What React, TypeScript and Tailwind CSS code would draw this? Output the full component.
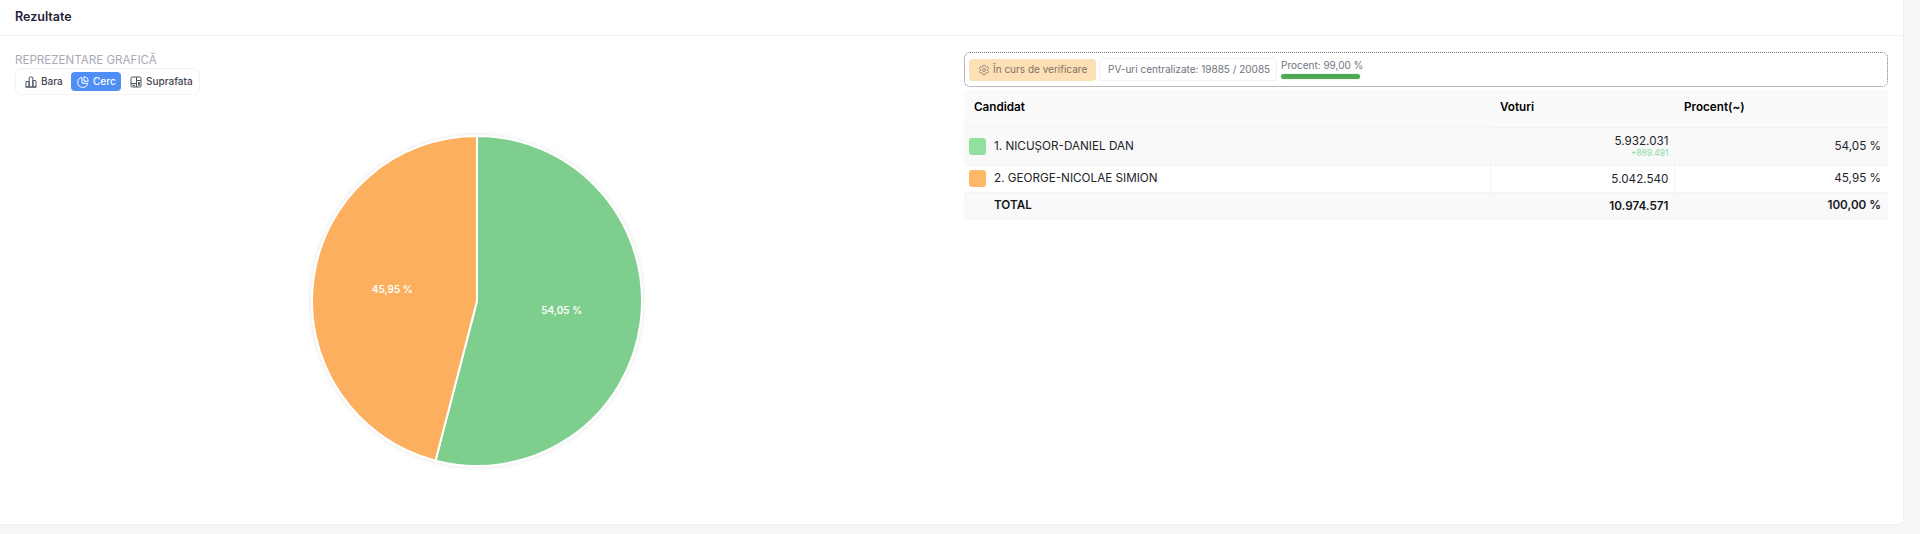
import { Settings } from 'lucide-react';

const font = "font-['Inter','Liberation_Sans',sans-serif]";

function BarIcon() {
  return (
    <svg width="12" height="12" viewBox="0 0 12 12" fill="none" stroke="#4b5563" strokeWidth="1">
      <path d="M1 5.5h3V11H1zM4.2 11V2a1 1 0 0 1 1-1h1.6a1 1 0 0 1 1 1v9zM8 4.5h2.2a.8.8 0 0 1 .8.8V11H8zM.5 11h11" />
    </svg>
  );
}

function PieIcon() {
  return (
    <svg width="12" height="12" viewBox="0 0 12 12" fill="none" stroke="#ffffff" strokeWidth="1">
      <path d="M5 1.4A5 5 0 1 0 10.7 7.2H5z" strokeLinejoin="round" />
      <path d="M7 .8a4.4 4.4 0 0 1 4.2 4.4H7z" strokeLinejoin="round" />
    </svg>
  );
}

function AreaIcon() {
  return (
    <svg width="12" height="12" viewBox="0 0 12 12" fill="none" stroke="#4b5563" strokeWidth="1">
      <rect x="1" y="1" width="10" height="10" rx="1.2" />
      <path d="M1 7.5h5.5M6.5 1v10M6.5 4.5H11" />
      <rect x="2.5" y="8.8" width="2.6" height="1.2" fill="#4b5563" stroke="none" />
      <rect x="8" y="6" width="1.8" height="3.6" fill="#4b5563" stroke="none" />
    </svg>
  );
}

function Pie() {
  const cx = 462;
  const cy = 207;
  const r = 165;
  const a = (54.05 / 100) * Math.PI * 2;
  const ex = cx + r * Math.sin(a);
  const ey = cy - r * Math.cos(a);
  return (
    <svg width="924" height="420" className="block" style={{ overflow: 'visible' }}>
      <defs>
        <filter id="soft" x="-10%" y="-10%" width="120%" height="120%">
          <feDropShadow dx="0" dy="0" stdDeviation="2" floodColor="#000000" floodOpacity="0.12" />
        </filter>
      </defs>
      <g filter="url(#soft)" stroke="#ffffff" strokeWidth="2" strokeLinejoin="round">
        <path d={`M${cx} ${cy}L${cx} ${cy - r}A${r} ${r} 0 1 1 ${ex} ${ey}Z`} fill="#7ECF8D" />
        <path d={`M${cx} ${cy}L${ex} ${ey}A${r} ${r} 0 0 1 ${cx} ${cy - r}Z`} fill="#FBAF5F" />
      </g>
      <text x="546.7" y="220.3" textAnchor="middle" fontSize="10" fontWeight="600" fill="#ffffff">54,05 %</text>
      <text x="377.3" y="198.6" textAnchor="middle" fontSize="10" fontWeight="600" fill="#ffffff">45,95 %</text>
    </svg>
  );
}

const rows = [
  { name: '1. NICUȘOR-DANIEL DAN', color: 'bg-[#92e09f]', votes: '5.932.031', extra: '+889.491', pct: '54,05 %', shade: true },
  { name: '2. GEORGE-NICOLAE SIMION', color: 'bg-[#fdb968]', votes: '5.042.540', pct: '45,95 %', shade: false },
];

export default function App() {
  return (
    <div className={`${font} h-[534px] w-full overflow-hidden bg-[#f6f6f7] text-[#181c32]`}>
      <div className="h-[525px] w-[1904px] rounded-br-md border-r border-b border-[#f1f1f3] bg-white">
        <div className="flex h-[36px] items-center border-b border-[#f4f4f6] px-[15px]">
          <h3 className="text-[12.5px] font-semibold text-[#1f2138]">Rezultate</h3>
        </div>
        <div className="flex gap-[25px] pl-[15px]">
          <div className="w-[924px]">
            <p className="mt-[17px] text-[11.6px] leading-[15px] text-[#a9abb8]">REPREZENTARE GRAFICĂ</p>
            <div className="flex h-[27px] w-[185px] items-center rounded-md border border-[#f3f3f5] pl-[3px] text-[10px] font-medium whitespace-nowrap text-[#3f4254]">
              <button className="flex h-[19px] w-[52px] items-center gap-[4px] pl-[6px]"><BarIcon />Bara</button>
              <button className="flex h-[19px] w-[50px] items-center gap-[4px] rounded bg-[#4f8ef7] pl-[6px] text-white"><PieIcon />Cerc</button>
              <button className="flex h-[19px] items-center gap-[4px] pl-[9px]"><AreaIcon />Suprafata</button>
            </div>
            <div className="-mt-[1px]">
              <Pie />
            </div>
          </div>
          <div className="w-[924px] pt-[16px]">
            <div className="flex h-[35px] items-center gap-[3px] rounded-md border border-dotted border-[#777777] px-[4px] text-[10px] whitespace-nowrap">
              <span className="flex h-[22px] w-[127px] items-center gap-[3px] rounded bg-[#fde0b6] pl-[9px] text-[#7d7466]">
                <Settings size={12} strokeWidth={1.4} />În curs de verificare
              </span>
              <span className="flex h-[23px] w-[178px] items-center rounded border border-[#f0f0f2] pl-[8px] text-[#6f7280]">PV-uri centralizate: 19885 / 20085</span>
              <div className="ml-[1px] -mt-[1px] w-[82px]">
                <p className="text-[10px] leading-[13px] text-[#71747f]">Procent: 99,00 %</p>
                <div className="mt-[2px] h-[5px] w-[79px] rounded-full bg-[#4da854] shadow-[0_0_2px_#4da85455]" />
              </div>
            </div>
            <table className="mt-[3px] w-[924px] table-fixed border-collapse text-[11.7px] text-[#22242c]">
              <thead>
                <tr className="h-[37px] bg-[#fafafa] text-left text-black">
                  <th className="w-[526px] pl-[10px] font-semibold">Candidat</th>
                  <th className="w-[184px] pl-[10px] font-semibold">Voturi</th>
                  <th className="pl-[10px] font-semibold">Procent(~)</th>
                </tr>
              </thead>
              <tbody>
                {rows.map((r) => (
                  <tr key={r.name} className={r.shade ? 'h-[38px] bg-[#f9f9f9]' : 'h-[27px] bg-white'}>
                    <td className={`border-t border-[#f5f5f5] pl-[5px] ${r.shade ? 'pt-[2px]' : ''}`}>
                      <div className="flex items-center gap-[8px]">
                        <span className={`${r.color} h-[17px] w-[17px] rounded-[3px]`} />
                        {r.name}
                      </div>
                    </td>
                    <td className="border-t border-l border-[#f3f3f3] pr-[5px] text-right">
                      <div className="leading-[14px]">{r.votes}</div>
                      {r.extra && <div className="text-[8.5px] leading-[10px] text-[#8fdca0]">{r.extra}</div>}
                    </td>
                    <td className={`border-t border-l border-[#f3f3f3] pr-[7px] text-right ${r.shade ? 'pt-[2px]' : ''}`}>{r.pct}</td>
                  </tr>
                ))}
                <tr className="h-[28px] bg-[#f9f9f9] font-semibold text-[#15171d]">
                  <td className="border-t border-[#f3f3f3] pl-[30px]">TOTAL</td>
                  <td className="border-t border-l border-[#f3f3f3] pt-[2px] pr-[5px] text-right">10.974.571</td>
                  <td className="border-t border-l border-[#f3f3f3] pr-[7px] text-right">100,00 %</td>
                </tr>
              </tbody>
            </table>
          </div>
        </div>
      </div>
    </div>
  );
}
